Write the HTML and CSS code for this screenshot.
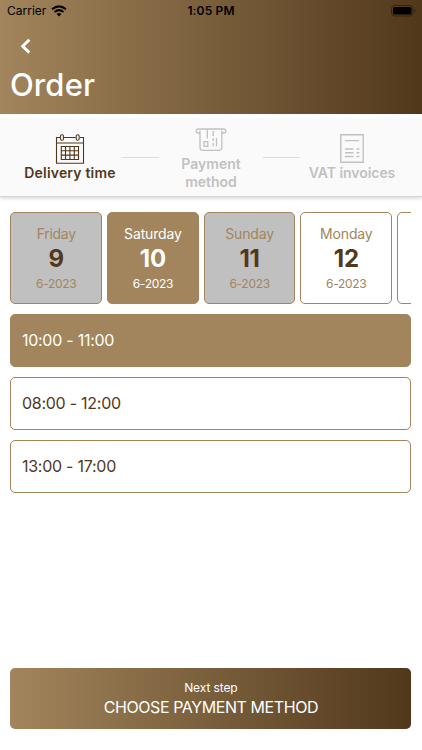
FILE: index.html
```html
<!DOCTYPE html>
<html lang="en">
<head>
<meta charset="utf-8">
<meta name="viewport" content="width=device-width, initial-scale=1">
<title>Order</title>
<link rel="stylesheet" href="styles.css">
</head>
<body>
<div class="screen">
  <header class="header">
    <div class="status">
      <div class="carrier">Carrier
        <svg width="16" height="12" viewBox="0 0 16 12" fill="none" stroke="#000" stroke-width="2.1"><path d="M1 4.3Q8-1.4 15 4.3M3.5 7Q8 3.4 12.5 7"/><path d="M5.6 8.9Q8 7.2 10.4 8.9L8 11.4Z" fill="#000" stroke="none"/></svg>
      </div>
      <div class="clock">1:05 PM</div>
      <svg class="battery" width="26" height="12" viewBox="0 0 26 12"><rect x=".5" y=".5" width="21.5" height="10.5" rx="3" fill="none" stroke="#000" stroke-opacity=".4"/><rect x="2" y="2" width="18.5" height="7.5" rx="1.6"/><path d="M23.5 4Q25.5 5.7 23.5 7.5Z" fill-opacity=".5"/></svg>
    </div>
    <svg class="back" width="12" height="16" viewBox="0 0 12 16" fill="none" stroke="#fff" stroke-width="2.9"><path d="M9.3 1.8 2.7 8.2 9.3 14.6"/></svg>
    <h1 class="title">Order</h1>
  </header>

  <nav class="steps">
    <div class="step active">
      <svg width="30" height="30" viewBox="0 0 30 30" fill="none" stroke="currentColor" stroke-width="1.1"><path d="M5 3.5H1.5V29.2H28.5V3.5H25M9 3.5H20.6M1.5 9H28.5"/><rect x="5.5" y=".8" width="3" height="5.4" rx="1.4"/><rect x="21.2" y=".8" width="3" height="5.4" rx="1.4"/><path d="M6.3 12.5H23.5V25.5H6.3ZM10.5 12.5V25.5M14.9 12.5V25.5M19.3 12.5V25.5M6.3 16.8H23.5M6.3 21.1H23.5"/></svg>
      <span class="label delivery">Delivery time</span>
    </div>
    <i class="line"></i>
    <div class="step middle">
      <svg width="32" height="24" viewBox="0 0 32 24" fill="none" stroke="currentColor" stroke-width="1.3"><path d="M5 5H3.4Q1.2 5 1.2 3T3.4 1H28.6Q30.8 1 30.8 3T28.6 5H27M5 2.8V19.2Q5 22.4 8 22.4H23.5Q26.8 22.4 26.8 19.2V2.8M12.3 2V10.5M18.2 3V8M18.2 10V13M18.2 15V18.3M21.5 10V18.3"/><rect x="9" y="13.7" width="3.8" height="4.6"/></svg>
      <span class="label payment">Payment<br>method</span>
    </div>
    <i class="line"></i>
    <div class="step">
      <svg width="24" height="29" viewBox="0 0 24 29" fill="none" stroke="currentColor" stroke-width="1.4"><path d="M.8.8H23.2V28.2H.8ZM5 6.6H19M5 15H13.5M5 18.7H13.5M5 22.5H13.5M16.5 15H19.3M16.5 18.7H19.3M16.5 22.5H19.3"/></svg>
      <span class="label invoices">VAT invoices</span>
    </div>
  </nav>

  <main class="content">
    <div class="days">
      <div class="day disabled"><span class="name friday">Friday</span><b>9</b><small>6-2023</small></div>
      <div class="day selected"><span class="name">Saturday</span><b>10</b><small>6-2023</small></div>
      <div class="day disabled"><span class="name">Sunday</span><b>11</b><small>6-2023</small></div>
      <div class="day"><span class="name">Monday</span><b>12</b><small>6-2023</small></div>
      <div class="day"></div>
    </div>
    <div class="slots">
      <div class="slot selected">10:00 - 11:00</div>
      <div class="slot">08:00 - 12:00</div>
      <div class="slot">13:00 - 17:00</div>
    </div>
    <button class="next"><span class="hint">Next step</span><span class="action">CHOOSE PAYMENT METHOD</span></button>
  </main>
</div>
</body>
</html>
```
FILE: styles.css
```css
* { box-sizing: border-box; }
body { margin: 0; font-family: Inter, "Liberation Sans", sans-serif; background: #fff; color: #51381b; }
.screen { width: 422px; height: 750px; display: flex; flex-direction: column; overflow: hidden; }
svg { display: block; flex: none; }

.header { height: 114px; flex: none; background: linear-gradient(90deg, #a2855c 0%, #51381b 100%); color: #fff; }
.status { height: 22px; display: grid; grid-template-columns: 1fr auto 1fr; align-items: center; padding: 0 5px 0 7px; color: #000; font-size: 12px; line-height: 22px; }
.carrier { display: flex; align-items: center; gap: 5px; letter-spacing: 0; }
.clock { font-weight: 600; letter-spacing: .15px; margin-left: -2px; }
.battery { justify-self: end; }
.back { margin: 16px 0 0 20px; }
.title { margin: 13px 0 0 10px; font-size: 31px; line-height: 36px; font-weight: 500; letter-spacing: .1px; }

.steps { height: 79px; margin-top: 4px; flex: none; display: flex; align-items: center; background: #fafafa; border-bottom: 1px solid #d4d4d4; box-shadow: 0 2px 3px rgba(0, 0, 0, .12); }
.step { width: 122px; padding: 1px 0 0; display: flex; flex-direction: column; align-items: center; color: #c1c1c1; flex: 1; }
.step.active { color: #51381b; }
.step.middle { padding-top: 4px; }
.line { width: 37px; height: 1px; background: #dcdcdc; flex: none; margin: 0 -18px; }
.label { font-size: 14px; line-height: 18px; font-weight: 600; text-align: center; white-space: nowrap; }
.delivery { letter-spacing: .18px; }
.payment { padding-top: 3px; }
.invoices { padding-top: 1px; letter-spacing: -.05px; }

.content { flex: 1; display: flex; flex-direction: column; padding: 15px 10.4px 21px; min-height: 0; }
.days { display: flex; gap: 5px; overflow: hidden; width: 401px; flex: none; }
.day { width: 91.7px; height: 92px; flex: none; border: 1px solid #a2855c; border-radius: 5px; display: flex; flex-direction: column; align-items: center; padding-top: 12px; color: #a2855c; }
.day.disabled { background: #c0c0c0; }
.name { font-size: 14px; line-height: 18px; letter-spacing: -.15px; }
.friday { letter-spacing: -.3px; }
.day b { color: #51381b; font-size: 24px; line-height: 29px; margin-top: 1px; letter-spacing: -.2px; }
.day small { font-size: 12px; line-height: 16px; margin-top: 3px; letter-spacing: -.3px; }
.day.selected, .slot.selected { background: #a2855c; color: #fff; }
.day.selected b { color: #fff; }
.slots { display: flex; flex-direction: column; gap: 10px; margin-top: 10px; }
.slot { width: 401px; height: 53px; border: 1px solid #a2855c; border-radius: 5px; padding-left: 10.5px; line-height: 51px; font-size: 16px; letter-spacing: -.25px; }
.next { margin-top: auto; width: 401px; height: 61px; flex: none; padding: 0; border: 0; border-radius: 5px; background: linear-gradient(90deg, #a2855c, #51381b); color: #fff; display: flex; flex-direction: column; align-items: center; justify-content: center; font-family: inherit; }
.hint { font-size: 12px; line-height: 18px; letter-spacing: -.1px; }
.action { font-size: 16px; line-height: 21px; letter-spacing: -.42px; }
```
